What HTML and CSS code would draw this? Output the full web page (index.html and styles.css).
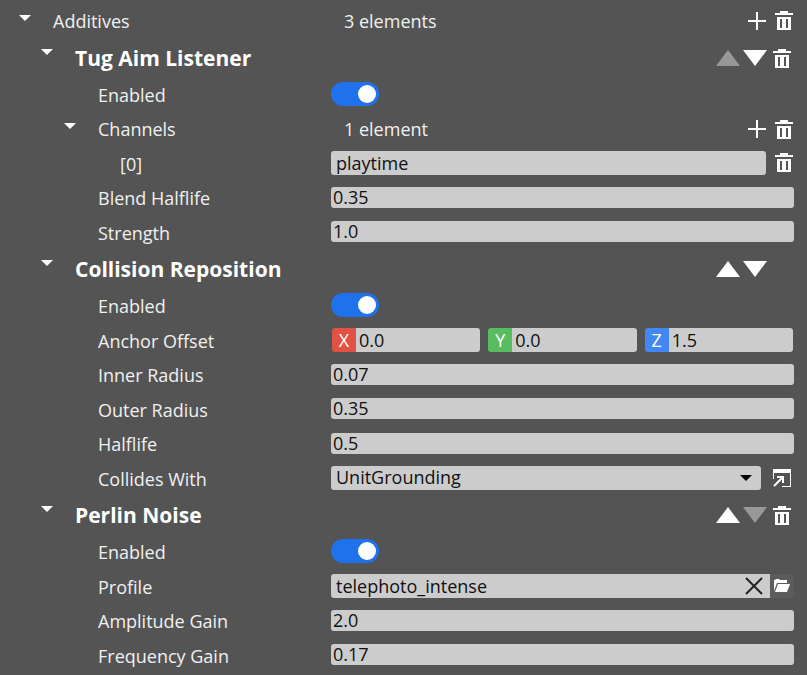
FILE: index.html
```
<!DOCTYPE html>
<html lang="en">
<head>
    <meta charset="UTF-8">
    <meta name="viewport" content="width=device-width, initial-scale=1.0">
    <title>Additives</title>
    <link rel="stylesheet" href="styles.css">
</head>
<body>
    <!-- shared icons -->
    <svg class="sprite" aria-hidden="true">
        <symbol id="caret" viewBox="0 0 12 6"><path d="M0 0h12L6 6z"/></symbol>
        <symbol id="up" viewBox="0 0 24 16"><path d="M12 0l12 16H0z"/></symbol>
        <symbol id="down" viewBox="0 0 24 16"><path d="M0 0h24L12 16z"/></symbol>
        <symbol id="plus" viewBox="0 0 18 18"><path d="M8 0h2v8h8v2h-8v8H8v-8H0V8h8z"/></symbol>
        <symbol id="trash" viewBox="0 0 18 19"><path fill-rule="evenodd" d="M5 0h8v2h5v2H0V2h5zM2 6h14v13H2zM5 8v9h2V8zM11 8v9h2V8z"/></symbol>
        <symbol id="open" viewBox="0 0 18 18"><path d="M0 0h18v18H9v-1h8V4H1v6H0z"/><path d="M1 17L10 8M4 8h6v6" fill="none" stroke="#fff" stroke-width="2"/></symbol>
        <symbol id="cross" viewBox="0 0 18 18"><path d="M1 1l16 16M17 1L1 17" fill="none" stroke="#222" stroke-width="2"/></symbol>
        <symbol id="folder" viewBox="0 0 16 13"><path d="M0 12V1h1l1-1h3l1 1h7v3H3z"/><path d="M4 5h12l-3 8H1z"/></symbol>
    </svg>

    <main class="inspector">
        <div class="row first">
            <div class="name root"><button class="fold" aria-label="Fold Additives"><svg><use href="#caret"/></svg></button>Additives</div>
            <div class="value">
                <span class="count">3 elements</span>
                <button class="icon plus" aria-label="Add additive"><svg><use href="#plus"/></svg></button>
                <button class="icon trash" aria-label="Clear additives"><svg><use href="#trash"/></svg></button>
            </div>
        </div>

        <section>
            <div class="header">
                <button class="fold" aria-label="Fold Tug Aim Listener"><svg><use href="#caret"/></svg></button>
                <h2>Tug Aim Listener</h2>
                <button class="move" aria-label="Move up" disabled><svg><use href="#up"/></svg></button>
                <button class="move" aria-label="Move down"><svg><use href="#down"/></svg></button>
                <button class="icon trash" aria-label="Remove"><svg><use href="#trash"/></svg></button>
            </div>
            <div class="row">
                <label class="name" for="tugEnabled">Enabled</label>
                <div class="value input"><input type="checkbox" class="toggle" id="tugEnabled" checked></div>
            </div>
            <div class="row short">
                <div class="name list"><button class="fold" aria-label="Fold Channels"><svg><use href="#caret"/></svg></button>Channels</div>
                <div class="value">
                    <span class="count">1 element</span>
                    <button class="icon plus" aria-label="Add channel"><svg><use href="#plus"/></svg></button>
                    <button class="icon trash" aria-label="Clear channels"><svg><use href="#trash"/></svg></button>
                </div>
            </div>
            <div class="row">
                <label class="name item" for="channel0">[0]</label>
                <div class="value input">
                    <input type="text" class="field text" id="channel0" value="playtime">
                    <button class="icon trash" aria-label="Remove channel"><svg><use href="#trash"/></svg></button>
                </div>
            </div>
            <div class="row short">
                <label class="name" for="blend">Blend Halflife</label>
                <div class="value input"><input type="text" class="field" id="blend" value="0.35"></div>
            </div>
            <div class="row">
                <label class="name" for="strength">Strength</label>
                <div class="value input"><input type="text" class="field" id="strength" value="1.0"></div>
            </div>
        </section>

        <section>
            <div class="header">
                <button class="fold" aria-label="Fold Collision Reposition"><svg><use href="#caret"/></svg></button>
                <h2>Collision Reposition</h2>
                <button class="move" aria-label="Move up"><svg><use href="#up"/></svg></button>
                <button class="move last" aria-label="Move down"><svg><use href="#down"/></svg></button>
            </div>
            <div class="row">
                <label class="name" for="collisionEnabled">Enabled</label>
                <div class="value input"><input type="checkbox" class="toggle" id="collisionEnabled" checked></div>
            </div>
            <div class="row">
                <div class="name">Anchor Offset</div>
                <div class="value input vector">
                    <div class="axis"><label class="x" for="offsetX">X</label><input type="text" class="field" id="offsetX" value="0.0"></div>
                    <div class="axis"><label class="y" for="offsetY">Y</label><input type="text" class="field" id="offsetY" value="0.0"></div>
                    <div class="axis"><label class="z" for="offsetZ">Z</label><input type="text" class="field" id="offsetZ" value="1.5"></div>
                </div>
            </div>
            <div class="row short">
                <label class="name" for="inner">Inner Radius</label>
                <div class="value input"><input type="text" class="field" id="inner" value="0.07"></div>
            </div>
            <div class="row">
                <label class="name" for="outer">Outer Radius</label>
                <div class="value input"><input type="text" class="field" id="outer" value="0.35"></div>
            </div>
            <div class="row short">
                <label class="name" for="halflife">Halflife</label>
                <div class="value input"><input type="text" class="field" id="halflife" value="0.5"></div>
            </div>
            <div class="row">
                <label class="name" for="collides">Collides With</label>
                <div class="value input">
                    <div class="dropdown">
                        <select id="collides"><option>UnitGrounding</option></select>
                        <svg class="arrow"><use href="#caret"/></svg>
                    </div>
                    <button class="icon open" aria-label="Open settings"><svg><use href="#open"/></svg></button>
                </div>
            </div>
        </section>

        <section>
            <div class="header">
                <button class="fold" aria-label="Fold Perlin Noise"><svg><use href="#caret"/></svg></button>
                <h2>Perlin Noise</h2>
                <button class="move" aria-label="Move up"><svg><use href="#up"/></svg></button>
                <button class="move" aria-label="Move down" disabled><svg><use href="#down"/></svg></button>
                <button class="icon trash" aria-label="Remove"><svg><use href="#trash"/></svg></button>
            </div>
            <div class="row">
                <label class="name" for="noiseEnabled">Enabled</label>
                <div class="value input"><input type="checkbox" class="toggle" id="noiseEnabled" checked></div>
            </div>
            <div class="row">
                <label class="name" for="profile">Profile</label>
                <div class="value input asset">
                    <input type="text" class="field text" id="profile" value="telephoto_intense">
                    <button class="clear" aria-label="Clear profile"><svg><use href="#cross"/></svg></button>
                    <button class="browse" aria-label="Browse"><svg><use href="#folder"/></svg></button>
                </div>
            </div>
            <div class="row short">
                <label class="name" for="amplitude">Amplitude Gain</label>
                <div class="value input"><input type="text" class="field" id="amplitude" value="2.0"></div>
            </div>
            <div class="row">
                <label class="name" for="frequency">Frequency Gain</label>
                <div class="value input"><input type="text" class="field" id="frequency" value="0.17"></div>
            </div>
        </section>
    </main>
</body>
</html>
```
FILE: styles.css
```
* {
    box-sizing: border-box;
    margin: 0;
    padding: 0;
}

body {
    background: #545454;
    color: #f0f0f0;
    font-family: "Open Sans", "Noto Sans", sans-serif;
    font-size: 18px;
    line-height: 24px;
}

button {
    background: none;
    border: none;
    cursor: pointer;
    flex: none;
}

svg {
    display: block;
    fill: #fff;
    width: 100%;
    height: 100%;
}

.sprite {
    position: absolute;
    width: 0;
    height: 0;
}

.inspector {
    padding: 3px 13px 2px 0;
}

.row {
    display: flex;
    align-items: center;
    height: 35px;
}

.row.first {
    margin-bottom: 1px;
}

.row.short {
    height: 34px;
}

.name {
    display: flex;
    align-items: center;
    flex: none;
    width: 331px;
    padding-left: 98px;
}

.name.root {
    padding-left: 19px;
}

.name.list {
    padding-left: 64px;
}

.name.item {
    padding-left: 120px;
}

.fold {
    width: 12px;
    height: 6px;
    margin: 0 22px 6px 0;
}

.value {
    display: flex;
    align-items: center;
    flex: 1;
    min-width: 0;
}

.input {
    padding-bottom: 2px;
}

.count {
    flex: 1;
    padding-left: 13px;
}

.header {
    display: flex;
    align-items: center;
    height: 38px;
    padding: 0 3px 0 41px;
}

.header .fold {
    margin-bottom: 12px;
}

.header h2 {
    flex: 1;
    color: #fff;
    font-size: 21px;
    line-height: 28px;
}

.move {
    width: 24px;
    height: 16px;
    margin-left: 3px;
}

.move:disabled {
    opacity: 0.4;
}

.move.last {
    margin-right: 24px;
}

.icon {
    width: 18px;
    height: 18px;
}

.trash {
    height: 19px;
    margin-left: 9px;
    margin-right: 1px;
}

.header .trash {
    margin-left: 6px;
    margin-right: 0;
}

.open {
    margin: 0 3px 0 12px;
}

.field,
select {
    flex: 1;
    min-width: 0;
    width: 100%;
    height: 21px;
    padding: 0 2px;
    border: none;
    border-radius: 3px;
    background: #ccc;
    color: #111;
    font: inherit;
    line-height: 21px;
    outline: none;
}

.text {
    height: 24px;
    padding: 0 5px;
}

.toggle {
    appearance: none;
    display: flex;
    align-items: center;
    width: 48px;
    height: 24px;
    padding: 0 3px;
    border-radius: 12px;
    background: #888;
    cursor: pointer;
}

.toggle::before {
    content: "";
    width: 18px;
    height: 18px;
    border-radius: 50%;
    background: #fff;
}

.toggle:checked {
    justify-content: flex-end;
    background: #2072ec;
}

.vector {
    gap: 8px;
    padding-left: 1px;
    padding-right: 1px;
}

.axis {
    display: flex;
    flex: 1;
    min-width: 0;
    height: 24px;
    border-radius: 3px;
    overflow: hidden;
}

.axis label {
    flex: none;
    width: 24px;
    color: #fff;
    text-align: center;
}

.axis .field {
    height: 24px;
    padding: 0 3px;
    border-radius: 0;
}

.x {
    background: #e05245;
}

.y {
    background: #58bd60;
}

.z {
    background: #4387f5;
}

.dropdown {
    position: relative;
    flex: 1;
}

select {
    appearance: none;
    display: block;
    height: 24px;
    padding: 0 30px 0 5px;
}

.arrow {
    position: absolute;
    top: 9px;
    right: 8px;
    width: 14px;
    height: 6px;
    fill: #000;
    pointer-events: none;
}

.asset .field {
    border-radius: 3px 0 0 3px;
}

.clear {
    width: 30px;
    height: 24px;
    padding: 3px 7px 3px 5px;
    background: #ccc;
}

.browse {
    width: 24px;
    height: 24px;
    padding: 5px 4px 6px;
    border-radius: 0 3px 3px 0;
    background: #5c5c5c;
}
```
